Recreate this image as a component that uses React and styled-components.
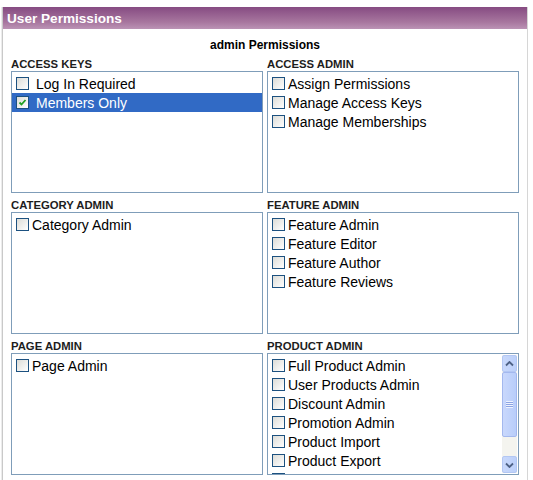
import React from 'react';
import styled, { createGlobalStyle } from 'styled-components';

const GlobalStyle = createGlobalStyle`
  body {
    margin: 0;
    background: #fff;
    font-family: "Liberation Sans", Arial, sans-serif;
  }
`;

const Panel = styled.div`
  margin: 7px 0 0 2px;
  width: 524px;
  height: 480px;
  border-left: 1px solid #c9c9c9;
  border-right: 1px solid #d6d6d6;
  box-shadow: -1px 0 0 #ececec;
`;

const Header = styled.div`
  height: 22px;
  display: flex;
  align-items: center;
  padding-left: 4px;
  background: linear-gradient(#864b82, #a8779f 70%, #bb93b5);
  color: #fff;
  font-size: 13.6px;
  font-weight: bold;
`;

const Body = styled.div`
  padding: 9px 8px 0 8px;
`;

const Title = styled.div`
  text-align: center;
  font-size: 12px;
  font-weight: bold;
  line-height: 14px;
  color: #000;
`;

const Grid = styled.div`
  display: grid;
  grid-template-columns: 252px 252px;
  column-gap: 4px;
  row-gap: 6px;
  margin-top: 6px;
`;

const Section = styled.div`
  display: flex;
  flex-direction: column;
`;

const Label = styled.div`
  font-size: 11.3px;
  font-weight: bold;
  line-height: 13px;
  height: 13px;
  color: #1d1d1d;
`;

const Box = styled.div`
  height: 120px;
  border: 1px solid #7f9db9;
  display: flex;
  overflow: hidden;
`;

const List = styled.div`
  flex: 1;
  padding-top: 2px;
  overflow: hidden;
`;

const Item = styled.div`
  height: 19px;
  display: flex;
  align-items: center;
  padding-left: 4px;
  font-size: 14px;
  color: ${p => (p.$selected ? '#fff' : '#000')};
  background: ${p => (p.$selected ? '#316ac5' : 'transparent')};
  white-space: nowrap;
`;

const Check = styled.span`
  width: 11px;
  height: 11px;
  flex: none;
  border: 1px solid #1c5180;
  background: linear-gradient(135deg, #dcdcd7, #fff);
  margin-right: ${p => (p.$wide ? '7px' : '3px')};
  display: flex;
  align-items: center;
  justify-content: center;
`;

const ScrollBar = styled.div`
  width: 15px;
  margin: 1px 1px 1px 0;
  display: flex;
  flex-direction: column;
  background: #f4f4ef;
`;

const ArrowButton = styled.div`
  height: 15px;
  border: 1px solid #b3c7f3;
  border-radius: 2px;
  background: linear-gradient(90deg, #c8d8fb, #bcd0fa);
  display: flex;
  align-items: center;
  justify-content: center;
`;

const Thumb = styled.div`
  height: 63px;
  border: 1px solid #a3b8ee;
  border-radius: 2px;
  background: linear-gradient(90deg, #c9d8fc, #b8cdfa);
  display: flex;
  align-items: center;
  justify-content: center;
`;

const Track = styled.div`
  flex: 1;
`;

const Grip = styled.div`
  width: 7px;
  height: 7px;
  background: repeating-linear-gradient(#eef3fe 0 1px, #8ca4e4 1px 2px);
`;

const Arrow = ({ down }) => (
  <svg width="9" height="6" viewBox="0 0 9 6">
    <path
      d={down ? 'M1 1.5 L4.5 5 L8 1.5' : 'M1 4.5 L4.5 1 L8 4.5'}
      fill="none"
      stroke="#4d6185"
      strokeWidth="1.8"
    />
  </svg>
);

const Tick = () => (
  <svg width="9" height="9" viewBox="0 0 9 9">
    <path d="M1.5 4.5 L3.5 6.5 L7.5 2" fill="none" stroke="#21a121" strokeWidth="1.8" />
  </svg>
);

const sections = [
  {
    label: 'ACCESS KEYS',
    wide: true,
    items: [
      { text: 'Log In Required' },
      { text: 'Members Only', checked: true, selected: true },
    ],
  },
  {
    label: 'ACCESS ADMIN',
    items: [
      { text: 'Assign Permissions' },
      { text: 'Manage Access Keys' },
      { text: 'Manage Memberships' },
    ],
  },
  { label: 'CATEGORY ADMIN', items: [{ text: 'Category Admin' }] },
  {
    label: 'FEATURE ADMIN',
    items: [
      { text: 'Feature Admin' },
      { text: 'Feature Editor' },
      { text: 'Feature Author' },
      { text: 'Feature Reviews' },
    ],
  },
  { label: 'PAGE ADMIN', items: [{ text: 'Page Admin' }] },
  {
    label: 'PRODUCT ADMIN',
    scroll: true,
    items: [
      { text: 'Full Product Admin' },
      { text: 'User Products Admin' },
      { text: 'Discount Admin' },
      { text: 'Promotion Admin' },
      { text: 'Product Import' },
      { text: 'Product Export' },
      { text: 'Product Reports' },
    ],
  },
];

export default function App() {
  return (
    <>
      <GlobalStyle />
      <Panel>
        <Header>User Permissions</Header>
        <Body>
          <Title>admin Permissions</Title>
          <Grid>
            {sections.map(s => (
              <Section key={s.label}>
                <Label>{s.label}</Label>
                <Box>
                  <List>
                    {s.items.map(it => (
                      <Item key={it.text} $selected={it.selected}>
                        <Check $wide={s.wide}>{it.checked && <Tick />}</Check>
                        {it.text}
                      </Item>
                    ))}
                  </List>
                  {s.scroll && (
                    <ScrollBar>
                      <ArrowButton><Arrow /></ArrowButton>
                      <Thumb><Grip /></Thumb>
                      <Track />
                      <ArrowButton><Arrow down /></ArrowButton>
                    </ScrollBar>
                  )}
                </Box>
              </Section>
            ))}
          </Grid>
        </Body>
      </Panel>
    </>
  );
}
